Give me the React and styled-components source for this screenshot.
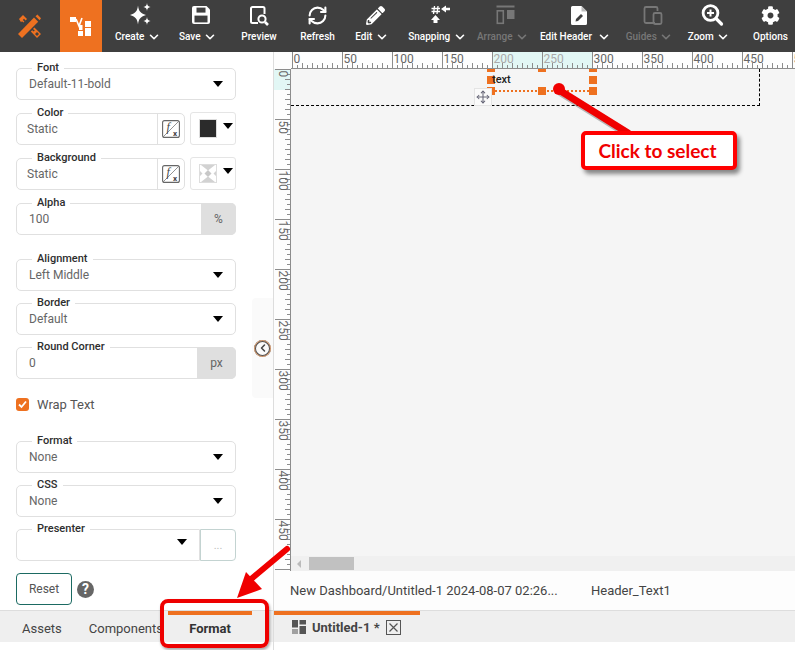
import React from "react";
import styled, { createGlobalStyle } from "styled-components";
import { ChevronDown, ChevronLeft, Move, RefreshCw } from "lucide-react";
import { FaPencilAlt, FaCog } from "react-icons/fa";

const ORANGE = "#ee7120";
const Global = createGlobalStyle`
  html, body { margin: 0; padding: 0; background: #fff; overflow: hidden; }
  * { box-sizing: border-box; }
  body { font-family: Roboto, "Liberation Sans", sans-serif; }
`;
const Page = styled.div`position: relative; width: 795px; height: 650px; overflow: hidden; display: flex; flex-direction: column; background: #fff;`;
const Toolbar = styled.header`height: 52px; flex: none; display: flex; background: #3f3f3f;`;
const LogoSlot = styled.div`width: 60px; flex: none; display: flex; align-items: center; justify-content: center;`;
const AppSlot = styled.div`width: 42px; flex: none; display: flex; align-items: center; justify-content: center; background: ${ORANGE};`;
const ToolItem = styled.div`
  width: ${p => p.$w}px; flex: none; display: flex; flex-direction: column; align-items: center; padding-top: 3px;
  color: ${p => (p.$off ? "#777" : "#fff")};
`;
const ToolIcon = styled.div`height: 24px; width: 24px; display: flex; align-items: center; justify-content: center; margin-left: ${p => p.$shift || 0}px;`;
const ToolLabel = styled.div`display: flex; align-items: center; height: 14px; margin-top: 3px; font-size: 10px; font-weight: 500; line-height: 14px; white-space: nowrap;`;
const Chev = styled.span`display: flex; margin-left: ${p => p.$gap || 2.5}px; margin-right: -3px;`;

const Workspace = styled.div`flex: 1; display: flex; min-height: 0;`;
const LeftCol = styled.aside`position: relative; width: 274px; flex: none; display: flex; flex-direction: column; border-right: 1px solid #ddd; padding-bottom: 8px;`;
const Form = styled.div`flex: 1; display: flex; flex-direction: column; padding: 16px 37px 0 16px;`;
const Row = styled.div`display: flex; margin-top: ${p => p.$mt || 0}px; height: 32px; flex: none; gap: ${p => p.$gap || 0}px;`;
const Box = styled.div`
  position: relative; flex: 1; min-width: 0; height: 32px; display: flex; align-items: center;
  border: 1px solid #e0e0e0; border-radius: ${p => p.$radius || "5px"};
  padding-left: ${p => p.$pl || 12}px; font-size: 12px; color: #666;
`;
const Legend = styled.span`
  position: absolute; left: 15px; top: -8px; background: #fff; padding: 0 5px;
  font-size: 11px; font-weight: 500; line-height: 14px; color: #2e2e2e; white-space: nowrap;
`;
const Value = styled.span`flex: 1; min-width: 0; margin-top: -1px;`;
const Caret = styled.i`
  flex: none; width: 0; height: 0; margin-right: ${p => p.$mr ?? 12}px; margin-bottom: ${p => p.$mb || 0}px;
  border-left: 5px solid transparent; border-right: 5px solid transparent; border-top: 6px solid #000;
`;
const FxButton = styled.div`width: 27px; height: 30px; flex: none; display: flex; align-items: center; justify-content: center; border-left: 1px solid #e0e0e0;`;
const SwatchBox = styled.div`width: 46px; height: 33px; margin-top: -1px; flex: none; display: flex; align-items: center; padding-left: 8px; gap: 6px; border: 1px solid #e5e5e5; border-radius: 3px;`;
const Swatch = styled.div`width: 18px; height: 19px; background: #2b2b2b; border: 1px solid #ddd;`;
const Addon = styled.div`width: ${p => p.$w}px; height: 32px; margin: -1px -1px -1px 0; flex: none; display: flex; align-items: center; justify-content: center; background: #dfdfdf; border-radius: 0 5px 5px 0; font-size: 12px; color: #666;`;
const WrapRow = styled.label`display: flex; align-items: center; gap: 8px; height: 14px; margin-top: 18px; font-size: 13px; color: #555;`;
const Check = styled.span`width: 13px; height: 13px; border-radius: 3px; background: ${ORANGE}; display: flex; align-items: center; justify-content: center;`;
const DotsButton = styled.div`width: 36px; height: 32px; flex: none; display: flex; align-items: center; justify-content: center; border: 1px solid #c3d3d1; border-radius: 0 4px 4px 0; color: #bbb; font-size: 11px;`;
const ResetRow = styled.div`display: flex; align-items: center; gap: 5px; margin-top: 12px;`;
const ResetBtn = styled.button`width: 56px; height: 32px; background: #fff; border: 1px solid #1b6a62; border-radius: 4px; font: 400 12px Roboto, sans-serif; color: #555; padding: 0;`;
const Help = styled.span`width: 17px; height: 17px; border-radius: 50%; background: #666; color: #fff; font-size: 14px; font-weight: 700; display: flex; align-items: center; justify-content: center;`;
const Collapse = styled.div`position: absolute; right: 0; top: 246px; width: 21px; height: 100px; background: #fafafa; border-radius: 4px 0 0 4px; display: flex; align-items: center; justify-content: center;`;
const CollapseDot = styled.span`width: 17px; height: 17px; border-radius: 50%; border: 2px solid #555; outline: 1px solid #eaa878; outline-offset: -1px; display: flex; align-items: center; justify-content: center; color: #444;`;

const TabBar = styled.nav`height: 32px; flex: none; display: flex; align-items: stretch; background: #efefef; border-top: 1px solid #ddd;`;
const Tab = styled.div`
  display: flex; align-items: center; justify-content: center; font-size: 13px; padding-bottom: 1px;
  color: ${p => (p.$active ? "#333" : "#444")}; font-weight: ${p => (p.$active ? 700 : 400)};
  margin-left: ${p => p.$ml || 0}px; width: ${p => (p.$w ? p.$w + "px" : "auto")};
  border-top: 4px solid ${p => (p.$active ? ORANGE : "transparent")};
`;
const FileTab = styled.div`width: 146px; display: flex; align-items: center; gap: 6px; padding: 0 0 3px 18px; border-top: 4px solid ${ORANGE}; font-size: 13px; font-weight: 700; color: #444;`;
const CloseBox = styled.span`width: 15px; height: 15px; display: flex;`;

const RightCol = styled.main`flex: 1; min-width: 0; display: flex; flex-direction: column; padding-bottom: 8px;`;
const TopRulerRow = styled.div`height: 17px; flex: none; display: flex; background: #fdfdfd;`;
const Corner = styled.div`width: 17px; flex: none;`;
const EditorRow = styled.div`height: 502px; flex: none; display: flex;`;
const SideRuler = styled.div`width: 17px; flex: none; background: #fdfdfd;`;
const CanvasCol = styled.div`flex: 1; min-width: 0; display: flex; flex-direction: column;`;
const Canvas = styled.div`position: relative; flex: 1; background: #f5f5f5; overflow: hidden;`;
const HeaderBand = styled.div`position: absolute; left: 0; top: 0; width: 469px; height: 37px; border-right: 1px dashed #000; border-bottom: 1px dashed #000;`;
const Selection = styled.div`position: absolute; left: 200px; top: 0; width: 102px; height: 22px;`;
const Handle = styled.span`position: absolute; width: 8px; height: 8px; background: ${ORANGE}; left: ${p => p.$x}px; top: ${p => p.$y}px;`;
const Dotted = styled.span`position: absolute; left: 0; right: 0; top: 21px; border-top: 2px dotted ${ORANGE};`;
const ElemText = styled.span`position: absolute; left: 1px; top: 4px; font-size: 11px; font-weight: 500; line-height: 14px; color: #222;`;
const MoveBox = styled.div`position: absolute; left: 183px; top: 19px; width: 18px; height: 18px; background: #fafafa; border: 1px solid #e4e4e4; display: flex; align-items: center; justify-content: center; color: #667;`;
const ScrollBar = styled.div`height: 15px; flex: none; display: flex; align-items: center; background: #f0f0f0;`;
const ScrollArrow = styled.i`width: 0; height: 0; margin-left: 6px; border-top: 4px solid transparent; border-bottom: 4px solid transparent; border-right: 4px solid #bbb;`;
const ScrollThumb = styled.div`width: 45px; height: 13px; margin-left: 8px; background: #c1c1c1;`;
const Status = styled.div`height: 39px; flex: none; display: flex; align-items: center; background: #fdfdfd; padding-left: 16px; font-size: 13px; color: #444;`;
const StatusPath = styled.span`width: 301px; flex: none;`;

const Callout = styled.div`
  position: absolute; left: 581px; top: 131px; width: 156px; height: 39px; display: flex; align-items: center; justify-content: center; padding: 0 3px 1px 0;
  background: #fff; border: 4px solid #ff0000; border-radius: 5px; box-shadow: 3px 4px 4px rgba(0,0,0,.45);
  color: #f00000; font: 700 19px Lato, "Open Sans", sans-serif;
`;
const Highlight = styled.div`position: absolute; left: 160px; top: 599px; width: 109px; height: 49px; border: 4px solid #ee0000; border-radius: 8px; box-shadow: 1px 2px 3px rgba(0,0,0,.35);`;
const Annot = styled.svg`position: absolute; left: 0; top: 0; pointer-events: none;`;

const IconLogo = () => (
  <svg width="24" height="24" viewBox="0 0 24 24" fill={ORANGE}>
    <path d="M1 5 L5 1 L9 5 L7.6 6.4 L6 4.8 L4.8 6 L6.4 7.6 L5.4 8.6 L4 7.2 L3 8.2 Z" />
    <path d="M15 15 L16.4 13.6 L23 20 L19 24 L12.8 17.6 L14.2 16.2 L15.6 17.6 L16.8 16.4 L15.6 15.4 Z M17 20 L19 22 L21 20 L19 18 Z" fillRule="evenodd" />
    <path d="M0 20 L16 3.6 L20.2 7.8 L4 24 Z" />
    <path d="M17.5 2.2 L19.4 0.6 L23 4.2 L21.6 6.2 Z" />
  </svg>
);
const IconApp = () => (
  <svg width="22" height="22" viewBox="0 0 22 22" fill="#fff">
    <rect x="0" y="2" width="6" height="5" />
    <path d="M6 4 L9 11 L12 3" fill="none" stroke="#fff" strokeWidth="1.6" />
    <rect x="9" y="10" width="3.5" height="5" />
    <rect x="8" y="16" width="5" height="5" />
    <rect x="15" y="6" width="6" height="6" />
    <rect x="15" y="13" width="6" height="8" />
  </svg>
);
const IconCreate = () => (
  <svg width="24" height="24" viewBox="0 0 24 24" fill="#fff">
    <path d="M9 2.5 C9.8 8 11 10 17 12 C11 14 9.8 16 9 21.5 C8.2 16 7 14 1 12 C7 10 8.2 8 9 2.5 Z" />
    <path d="M18 0 C18.4 2.6 19 3.4 21.6 4 C19 4.6 18.4 5.4 18 8 C17.6 5.4 17 4.6 14.4 4 C17 3.4 17.6 2.6 18 0 Z" />
    <path d="M18 14 C18.4 16.6 19 17.4 21.6 18 C19 18.6 18.4 19.4 18 22 C17.6 19.4 17 18.6 14.4 18 C17 17.4 17.6 16.6 18 14 Z" />
  </svg>
);
const IconSave = () => (
  <svg width="24" height="24" viewBox="0 0 24 24">
    <path d="M5 3 H17.5 L21 6.5 V19 A2 2 0 0 1 19 21 H5 A2 2 0 0 1 3 19 V5 A2 2 0 0 1 5 3 Z" fill="#fff" />
    <rect x="7.5" y="4.6" width="9" height="5" fill="#3f3f3f" />
    <rect x="5.5" y="12.6" width="13" height="6.8" fill="#3f3f3f" />
  </svg>
);
const IconPreview = () => (
  <svg width="24" height="24" viewBox="0 0 24 24" fill="none" stroke="#fff" strokeWidth="2">
    <path d="M11 20 H5.5 A1.5 1.5 0 0 1 4 18.5 V5.5 A1.5 1.5 0 0 1 5.5 4 H16 A1.5 1.5 0 0 1 17.5 5.5 V11" />
    <circle cx="15" cy="16" r="3.6" />
    <path d="M18 19 L21 22" strokeWidth="2.6" />
  </svg>
);
const IconSnap = () => (
  <svg width="24" height="24" viewBox="0 0 24 24" fill="#fff">
    <path d="M5.5 3 L4.5 11 M9 3 L8 11 M2.5 5.5 H11 M2.5 8.5 H11" stroke="#fff" strokeWidth="1.3" fill="none" />
    <path d="M12 6 L17 2.5 V4.8 H21 V7.2 H17 V9.5 Z" />
    <path d="M6.5 12 L11 17 H8.5 V20 H4.5 V17 H2 Z" />
  </svg>
);
const IconArrange = () => (
  <svg width="24" height="24" viewBox="0 0 24 24" fill="#777">
    <rect x="2.5" y="2.5" width="18" height="2" />
    <rect x="3.3" y="7.8" width="6" height="12.5" fill="none" stroke="#777" strokeWidth="1.6" />
    <rect x="13" y="7" width="7.5" height="9" />
  </svg>
);
const IconHeader = () => (
  <svg width="24" height="24" viewBox="0 0 24 24">
    <path d="M5.5 3 H14.5 L20 8.5 V20.5 A1.5 1.5 0 0 1 18.5 22 H5.5 A1.5 1.5 0 0 1 4 20.5 V4.5 A1.5 1.5 0 0 1 5.5 3 Z" fill="#fff" />
    <path d="M14.5 3 V8.5 H20" fill="#bbb" />
    <path d="M8.5 18.5 L9 16 L14 11 L16 13 L11 18 Z" fill="#3f3f3f" />
  </svg>
);
const IconGuides = () => (
  <svg width="24" height="24" viewBox="0 0 24 24" fill="none" stroke="#777" strokeWidth="1.8">
    <path d="M14 20 H5 A1.5 1.5 0 0 1 3.5 18.5 V5.5 A1.5 1.5 0 0 1 5 4 H15 A1.5 1.5 0 0 1 16.5 5.5 V8" />
    <rect x="12.5" y="10" width="8" height="11" rx="1.5" />
  </svg>
);
const IconZoom = () => (
  <svg width="24" height="24" viewBox="0 0 24 24" fill="none" stroke="#fff" strokeWidth="2.8">
    <circle cx="10.5" cy="10" r="7.4" />
    <path d="M10.5 6.5 V13.5 M7 10 H14" strokeWidth="2" />
    <path d="M16 15.5 L21.5 21" strokeWidth="3.2" strokeLinecap="round" />
  </svg>
);
const IconFx = () => (
  <svg width="18" height="18" viewBox="0 0 18 18">
    <rect x="0.6" y="0.6" width="16.8" height="16.8" rx="2" fill="none" stroke="#666" strokeWidth="1.1" />
    <path d="M1 17 L17 1" stroke="#777" strokeWidth="0.8" />
    <text x="4.5" y="10.5" fontFamily="Liberation Serif, serif" fontStyle="italic" fontSize="12" fill="#444">f</text>
    <text x="11" y="15.5" fontFamily="Roboto, sans-serif" fontWeight="700" fontSize="8" fill="#444">x</text>
  </svg>
);
const TransparentSwatch = () => (
  <svg width="18" height="19" viewBox="0 0 18 19">
    <rect x="0.5" y="0.5" width="17" height="18" fill="#fff" stroke="#ddd" />
    <path d="M2 1 H16 L9 6.5 Z M2 18 L9 12.5 L16 18 Z M1 7 L3.5 9.5 L1 12 Z M17 7 L14.5 9.5 L17 12 Z" fill="#d2d2d2" />
    <path d="M9 6 L12.5 9.5 L9 13 L5.5 9.5 Z" fill="#c8c8c8" />
  </svg>
);
const IconGrid = () => (
  <svg width="14" height="14" viewBox="0 0 14 14" fill="#555">
    <rect x="0" y="0" width="6" height="7.5" />
    <rect x="0" y="9" width="6" height="5" fill="#a0a0a0" />
    <rect x="7.5" y="0" width="6.5" height="4.5" />
    <rect x="7.5" y="6" width="6.5" height="8" />
  </svg>
);
const IconClose = () => (
  <svg width="15" height="15" viewBox="0 0 15 15" fill="none" stroke="#555">
    <rect x="0.5" y="0.5" width="14" height="14" />
    <path d="M3.5 3.5 L11.5 11.5 M11.5 3.5 L3.5 11.5" strokeWidth="1.2" />
  </svg>
);

const rulerTicks = (len) => {
  const t = [];
  for (let i = 0; i * 5 <= len; i++) t.push(i * 5);
  return t;
};
const TopRuler = () => {
  const vals = [0, 50, 100, 150, 200, 250, 300, 350, 400, 450, 500];
  return (
    <svg width="504" height="17" style={{ display: "block" }}>
      <rect x="201" y="0" width="100" height="16" fill="#e2f7f5" />
      {rulerTicks(504).map(v => (
        <rect key={v} x={v + 1} y={v % 50 === 0 ? 0 : v % 10 === 0 ? 11 : 13} width="1" height={v % 50 === 0 ? 16 : v % 10 === 0 ? 5 : 3} fill="#8c8c8c" />
      ))}
      <rect x="0" y="16" width="504" height="1" fill="#8c8c8c" />
      {vals.map(v => (
        <text key={v} x={v + 2.5} y="10.5" fontFamily="Roboto, sans-serif" fontSize="12" fill={v === 200 || v === 250 ? "#aaa" : "#666"}>{v}</text>
      ))}
    </svg>
  );
};
const LeftRuler = () => {
  const vals = [0, 50, 100, 150, 200, 250, 300, 350, 400, 450];
  return (
    <svg width="17" height="502" style={{ display: "block" }}>
      <rect x="0" y="0" width="16" height="21" fill="#e2f7f5" />
      {rulerTicks(502).map(v => (
        <rect key={v} y={v} x={v % 50 === 0 ? 1 : v % 10 === 0 ? 11 : 13} height="1" width={v % 50 === 0 ? 15 : v % 10 === 0 ? 5 : 3} fill="#8c8c8c" />
      ))}
      <rect x="16" y="0" width="1" height="502" fill="#8c8c8c" />
      {vals.map(v => (
        <text key={v} x="5" y={v + 1.5} transform={`rotate(90 5 ${v + 1.5})`} fontFamily="Roboto, sans-serif" fontSize="12" fill="#666">{v}</text>
      ))}
    </svg>
  );
};

const tools = [
  { l: "Create", w: 69, i: <IconCreate />, c: 1 },
  { l: "Save", w: 51, i: <IconSave />, c: 1 },
  { l: "Preview", w: 74, i: <IconPreview /> },
  { l: "Refresh", w: 43, i: <RefreshCw size={21} strokeWidth={2.4} /> },
  { l: "Edit", w: 63, i: <FaPencilAlt size={19} />, c: 1 },
  { l: "Snapping", w: 68, i: <IconSnap />, c: 1 },
  { l: "Arrange", w: 63, i: <IconArrange />, c: 1, off: 1 },
  { l: "Edit Header", w: 82, i: <IconHeader />, c: 1, gap: 5 },
  { l: "Guides", w: 66, i: <IconGuides />, c: 1, off: 1 },
  { l: "Zoom", w: 53, i: <IconZoom />, c: 1 },
  { l: "Options", w: 73, i: <FaCog size={19} /> },
];

const Select = ({ label, value, mt }) => (
  <Row $mt={mt}>
    <Box>
      <Legend>{label}</Legend>
      <Value>{value}</Value>
      <Caret />
    </Box>
  </Row>
);
const ColorField = ({ label, mt, swatch }) => (
  <Row $mt={mt} $gap={5}>
    <Box $pl={10}>
      <Legend>{label}</Legend>
      <Value>Static</Value>
      <FxButton><IconFx /></FxButton>
    </Box>
    <SwatchBox>
      {swatch}
      <Caret $mr={0} $mb={6} />
    </SwatchBox>
  </Row>
);
const UnitField = ({ label, value, unit, w, mt }) => (
  <Row $mt={mt}>
    <Box>
      <Legend>{label}</Legend>
      <Value>{value}</Value>
      <Addon $w={w}>{unit}</Addon>
    </Box>
  </Row>
);

export default function App() {
  return (
    <Page>
      <Global />
      <Toolbar>
        <LogoSlot><IconLogo /></LogoSlot>
        <AppSlot><IconApp /></AppSlot>
        {tools.map(t => (
          <ToolItem key={t.l} $w={t.w} $off={t.off}>
            <ToolIcon $shift={t.c ? 9 : 0}>{t.i}</ToolIcon>
            <ToolLabel>
              {t.l}
              {t.c ? <Chev $gap={t.gap}><ChevronDown size={14} strokeWidth={2.8} /></Chev> : null}
            </ToolLabel>
          </ToolItem>
        ))}
      </Toolbar>
      <Workspace>
        <LeftCol>
          <Form>
            <Select label="Font" value="Default-11-bold" />
            <ColorField label="Color" mt={13} swatch={<Swatch />} />
            <ColorField label="Background" mt={13} swatch={<TransparentSwatch />} />
            <UnitField label="Alpha" value="100" unit="%" w={35} mt={13} />
            <Select label="Alignment" value="Left Middle" mt={24} />
            <Select label="Border" value="Default" mt={12} />
            <UnitField label="Round Corner" value="0" unit="px" w={39} mt={12} />
            <WrapRow>
              <Check>
                <svg width="9" height="9" viewBox="0 0 9 9" fill="none" stroke="#fff" strokeWidth="1.8"><path d="M1 4.5 L3.5 7 L8 1.5" /></svg>
              </Check>
              Wrap Text
            </WrapRow>
            <Select label="Format" value="None" mt={30} />
            <Select label="CSS" value="None" mt={12} />
            <Row $mt={12}>
              <Box $radius="5px 0 0 5px">
                <Legend>Presenter</Legend>
                <Value />
                <Caret $mb={6} />
              </Box>
              <DotsButton>...</DotsButton>
            </Row>
            <ResetRow>
              <ResetBtn>Reset</ResetBtn>
              <Help>?</Help>
            </ResetRow>
          </Form>
          <Collapse>
            <CollapseDot><ChevronLeft size={12} strokeWidth={3} /></CollapseDot>
          </Collapse>
          <TabBar>
            <Tab $ml={22}>Assets</Tab>
            <Tab $ml={27}>Components</Tab>
            <Tab $ml={5} $w={84} $active>Format</Tab>
          </TabBar>
        </LeftCol>
        <RightCol>
          <TopRulerRow>
            <Corner />
            <TopRuler />
          </TopRulerRow>
          <EditorRow>
            <SideRuler><LeftRuler /></SideRuler>
            <CanvasCol>
              <Canvas>
                <HeaderBand />
                <Selection>
                  <Dotted />
                  <Handle $x={-4} $y={-5} /><Handle $x={47} $y={-5} /><Handle $x={98} $y={-5} />
                  <Handle $x={-4} $y={7} /><Handle $x={98} $y={7} />
                  <Handle $x={-4} $y={18} /><Handle $x={47} $y={18} /><Handle $x={98} $y={18} />
                  <ElemText>text</ElemText>
                </Selection>
                <MoveBox><Move size={14} strokeWidth={1.8} /></MoveBox>
              </Canvas>
              <ScrollBar>
                <ScrollArrow />
                <ScrollThumb />
              </ScrollBar>
            </CanvasCol>
          </EditorRow>
          <Status>
            <StatusPath>New Dashboard/Untitled-1 2024-08-07 02:26...</StatusPath>
            <span>Header_Text1</span>
          </Status>
          <TabBar>
            <FileTab>
              <IconGrid />
              <span>Untitled-1 *</span>
              <CloseBox><IconClose /></CloseBox>
            </FileTab>
          </TabBar>
        </RightCol>
      </Workspace>

      <Annot width="795" height="650" viewBox="0 0 795 650">
        <g fill="#f00000" stroke="#f00000">
          <path d="M559 90 L628 133" strokeWidth="7" strokeLinecap="round" fill="none" stroke="rgba(0,0,0,.25)" transform="translate(2 3)" />
          <path d="M559 90 L628 133" strokeWidth="7" strokeLinecap="round" fill="none" />
          <circle cx="559" cy="89" r="6" stroke="none" />
          <path d="M287 549 L250 580" strokeWidth="6" strokeLinecap="round" fill="none" />
          <path d="M246 572 L262 589 L237 598 Z" stroke="none" />
        </g>
      </Annot>
      <Callout>Click to select</Callout>
      <Highlight />
    </Page>
  );
}
